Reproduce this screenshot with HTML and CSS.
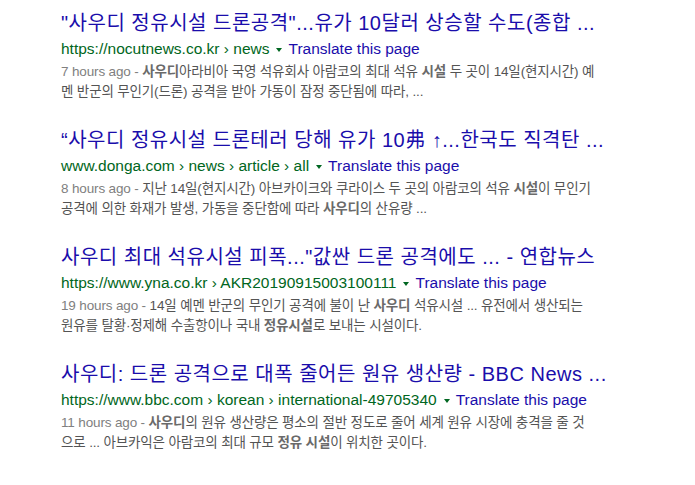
FILE: index.html
```html
<!DOCTYPE html>
<html>
<head>
<meta charset="utf-8">
<title>사우디 정유시설 - Search</title>
<link rel="stylesheet" href="styles.css">
</head>
<body>
<div class="results">

  <div class="result">
    <a class="title" href="#">"사우디 정유시설 드론공격"...유가 10달러 상승할 수도(종합 ...</a>
    <div class="url-row">
      <cite class="url">https://nocutnews.co.kr › news</cite>
      <span class="arrow"></span>
      <a class="translate" href="#">Translate this page</a>
    </div>
    <div class="snippet">
      <span class="date">7 hours ago - </span><b>사우디</b>아라비아 국영 석유회사 아람코의 최대 석유 <b>시설</b> 두 곳이 14일(현지시간) 예<br>멘 반군의 무인기(드론) 공격을 받아 가동이 잠정 중단됨에 따라, ...
    </div>
  </div>

  <div class="result">
    <a class="title" href="#">“사우디 정유시설 드론테러 당해 유가 10弗 ↑...한국도 직격탄 ...</a>
    <div class="url-row">
      <cite class="url">www.donga.com › news › article › all</cite>
      <span class="arrow"></span>
      <a class="translate" href="#">Translate this page</a>
    </div>
    <div class="snippet">
      <span class="date">8 hours ago - </span>지난 14일(현지시간) 아브카이크와 쿠라이스 두 곳의 아람코의 석유 <b>시설</b>이 무인기<br>공격에 의한 화재가 발생, 가동을 중단함에 따라 <b>사우디</b>의 산유량 ...
    </div>
  </div>

  <div class="result">
    <a class="title" href="#">사우디 최대 석유시설 피폭..."값싼 드론 공격에도 ... - 연합뉴스</a>
    <div class="url-row">
      <cite class="url">https://www.yna.co.kr › AKR20190915003100111</cite>
      <span class="arrow"></span>
      <a class="translate" href="#">Translate this page</a>
    </div>
    <div class="snippet">
      <span class="date">19 hours ago - </span>14일 예멘 반군의 무인기 공격에 불이 난 <b>사우디</b> 석유시설 ... 유전에서 생산되는<br>원유를 탈황·정제해 수출항이나 국내 <b>정유시설</b>로 보내는 시설이다.
    </div>
  </div>

  <div class="result">
    <a class="title" href="#">사우디: 드론 공격으로 대폭 줄어든 원유 생산량 - BBC News ...</a>
    <div class="url-row">
      <cite class="url">https://www.bbc.com › korean › international-49705340</cite>
      <span class="arrow"></span>
      <a class="translate" href="#">Translate this page</a>
    </div>
    <div class="snippet">
      <span class="date">11 hours ago - </span><b>사우디</b>의 원유 생산량은 평소의 절반 정도로 줄어 세계 원유 시장에 충격을 줄 것<br>으로 ... 아브카익은 아람코의 최대 규모 <b>정유 시설</b>이 위치한 곳이다.
    </div>
  </div>

</div>
</body>
</html>
```

FILE: styles.css
```css
body {
  margin: 0;
  background: #fff;
  font-family: "Liberation Sans", Arial, "Noto Sans CJK KR", sans-serif;
}

.results {
  padding: 10px 0 0 61px;
}

.result {
  margin-bottom: 25px;
}

.title {
  display: block;
  font-size: 20px;
  line-height: 26px;
  letter-spacing: 0.5px;
  color: #1a0dab;
  text-decoration: none;
  white-space: nowrap;
}

.url-row {
  display: flex;
  align-items: center;
  height: 26px;
  font-size: 15.5px;
  white-space: nowrap;
}

.url {
  font-style: normal;
  color: #006621;
}

.arrow {
  width: 0;
  height: 0;
  margin: 2px 6px 0 7px;
  border-left: 3px solid transparent;
  border-right: 3px solid transparent;
  border-top: 4px solid #006621;
}

.translate {
  color: #1a0dab;
  text-decoration: none;
}

.snippet {
  font-size: 13.5px;
  line-height: 20px;
  letter-spacing: -0.15px;
  color: #545454;
  white-space: nowrap;
}

.snippet b {
  color: #6a6a6a;
}

.date {
  color: #808080;
}
```
